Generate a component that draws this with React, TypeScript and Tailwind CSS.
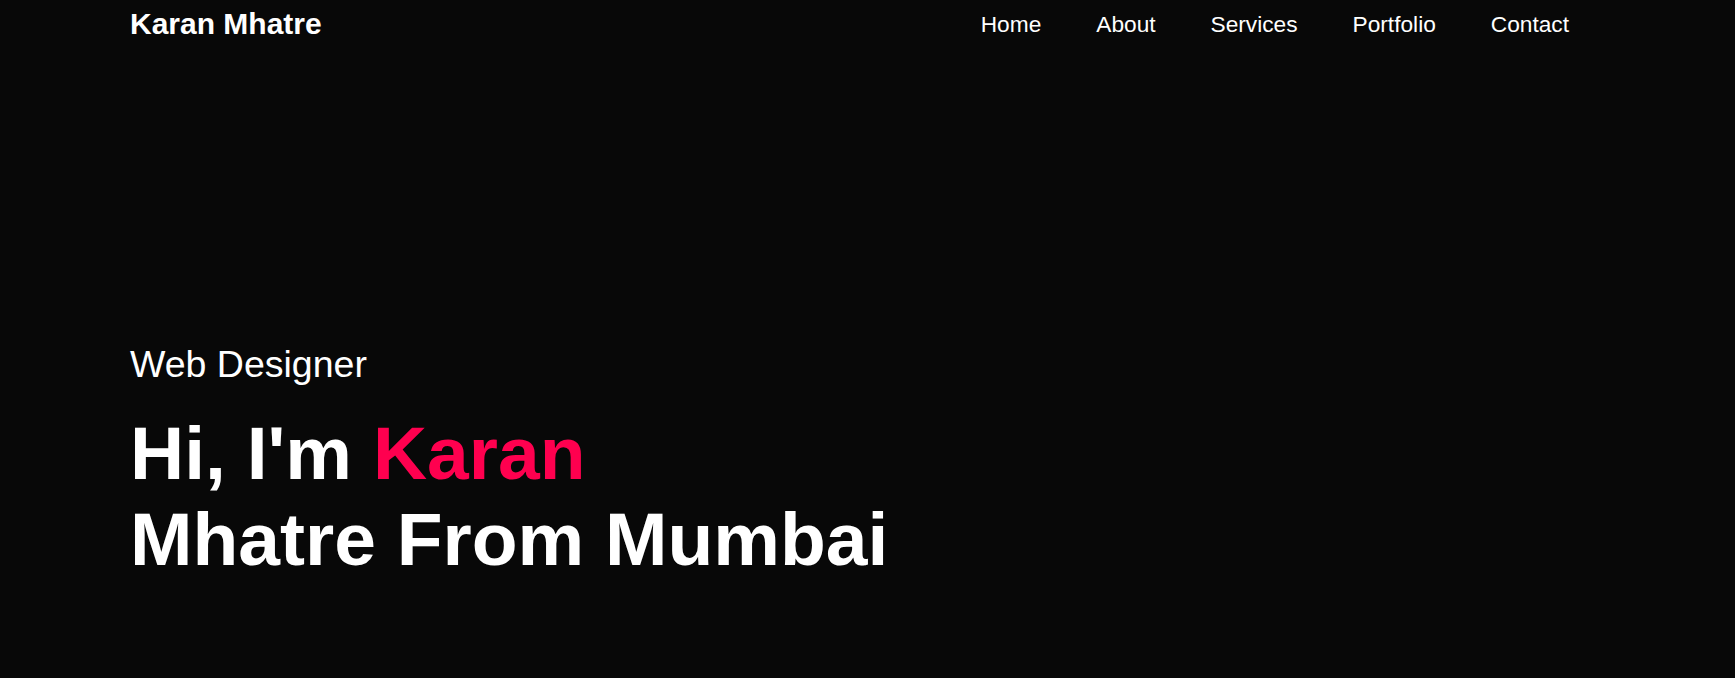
export default function App() {
  const links = ['Home', 'About', 'Services', 'Portfolio', 'Contact']

  return (
    <div className="min-h-screen w-full bg-[#080808] text-white font-['Liberation_Sans',Arial,sans-serif]">
      <div className="pl-[130px] pr-[166px]">
        {/* Header */}
        <nav className="flex justify-between items-start pt-[9px]">
          <a href="#" className="text-[30px] leading-[30px] font-bold">Karan Mhatre</a>
          <ul className="flex gap-[55px] mt-[4px] pl-0 list-none">
            {links.map((l) => (
              <li key={l}>
                <a href="#" className="text-[22.7px] leading-[22px]">{l}</a>
              </li>
            ))}
          </ul>
        </nav>

        {/* Hero text */}
        <div className="mt-[307px]">
          <p className="text-[37.5px] leading-[37px]">Web Designer</p>
          <h1 className="mt-[27px] text-[75px] leading-[86px] font-bold">
            Hi, I'm <span className="text-[#ff004f]">Karan</span>
            <br />
            Mhatre From Mumbai
          </h1>
        </div>
      </div>
    </div>
  )
}
